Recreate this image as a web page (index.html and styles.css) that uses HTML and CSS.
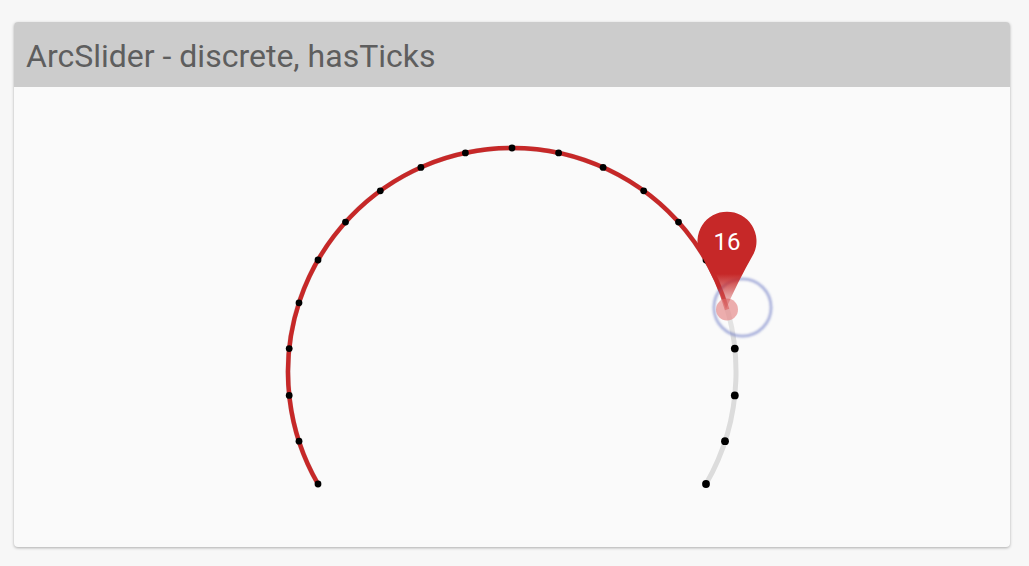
FILE: index.html
```html
<!DOCTYPE html>
<html>
<head>
<meta charset="utf-8">
<link rel="stylesheet" href="styles.css">
</head>
<body>
<div class="card">
  <div class="card-header">ArcSlider - discrete, hasTicks</div>
  <div class="card-body">
    <svg class="arc" width="996" height="460" viewBox="0 0 996 460" xmlns="http://www.w3.org/2000/svg">
      <defs>
        <linearGradient id="pinfade" x1="0" y1="0" x2="0" y2="1">
          <stop offset="0" stop-color="#c62828" stop-opacity="1"/>
          <stop offset="0.64" stop-color="#c62828" stop-opacity="1"/>
          <stop offset="0.86" stop-color="#c62828" stop-opacity="0.45"/>
          <stop offset="1" stop-color="#c62828" stop-opacity="0.15"/>
        </linearGradient>
        <filter id="blur" x="-20%" y="-20%" width="140%" height="140%">
          <feGaussianBlur stdDeviation="1"/>
        </filter>
      </defs>
      <path class="track" d="M 304 397 A 224 224 0 1 1 692 397"/>
      <path class="fill" d="M 304 397 A 224 224 0 1 1 713.1 222.5"/>
      <g class="ticks">
        <circle cx="304" cy="397" r="3.4"/>
        <circle cx="285" cy="354.2" r="3.4"/>
        <circle cx="275.2" cy="308.4" r="3.4"/>
        <circle cx="275.2" cy="261.6" r="3.4"/>
        <circle cx="285" cy="215.8" r="3.4"/>
        <circle cx="304" cy="173" r="3.4"/>
        <circle cx="331.5" cy="135.1" r="3.4"/>
        <circle cx="366.3" cy="103.8" r="3.4"/>
        <circle cx="406.9" cy="80.4" r="3.4"/>
        <circle cx="451.4" cy="65.9" r="3.4"/>
        <circle cx="498" cy="61" r="3.4"/>
        <circle cx="544.6" cy="65.9" r="3.4"/>
        <circle cx="589.1" cy="80.4" r="3.4"/>
        <circle cx="629.7" cy="103.8" r="3.4"/>
        <circle cx="664.5" cy="135.1" r="3.4"/>
        <circle cx="692" cy="173" r="3.4"/>
        <circle cx="720.8" cy="261.6" r="3.9"/>
        <circle cx="720.8" cy="308.4" r="3.9"/>
        <circle cx="711" cy="354.2" r="3.9"/>
        <circle cx="692" cy="397" r="3.9"/>
      </g>
      <circle class="focus-ring" cx="728.5" cy="220.5" r="28.5" filter="url(#blur)"/>
      <circle class="thumb" cx="713" cy="222.5" r="11"/>
      <g transform="translate(713 154)">
        <path class="pin" d="M -1 68 Q -10 42 -26.8 12.5 A 29.5 29.5 0 1 1 26.8 12.5 Q 10 42 -1 68 Z"/>
        <text class="pin-label" x="0" y="8.5" text-anchor="middle">16</text>
      </g>
    </svg>
  </div>
</div>
</body>
</html>
```
FILE: styles.css
```css
html, body {
  margin: 0;
  padding: 0;
  background: #f7f7f7;
}
body {
  padding: 22px 19px 19px 14px;
  font-family: Roboto, "Noto Sans", sans-serif;
}
.card {
  width: 996px;
  height: 525px;
  background: #fafafa;
  border-radius: 4px;
  box-shadow: 0 1px 3px rgba(0, 0, 0, 0.3);
  overflow: hidden;
  display: flex;
  flex-direction: column;
}
.card-header {
  height: 65px;
  background: #cccccc;
  color: #5e5e5e;
  font-size: 32px;
  line-height: 62px;
  padding: 3px 0 0 12px;
  box-sizing: border-box;
}
.card-body {
  flex: 1;
}
.arc {
  display: block;
}
.track {
  fill: none;
  stroke: #dcdcdc;
  stroke-width: 5;
}
.fill {
  fill: none;
  stroke: #c62828;
  stroke-width: 4.5;
}
.ticks circle {
  fill: #000;
}
.focus-ring {
  fill: rgba(255, 255, 255, 0.2);
  stroke: rgba(92, 107, 192, 0.5);
  stroke-width: 3;
}
.thumb {
  fill: rgba(230, 140, 140, 0.7);
}
.pin {
  fill: url(#pinfade);
}
.pin-label {
  fill: #ffffff;
  font-family: Roboto, "Noto Sans", sans-serif;
  font-size: 24px;
}
```
